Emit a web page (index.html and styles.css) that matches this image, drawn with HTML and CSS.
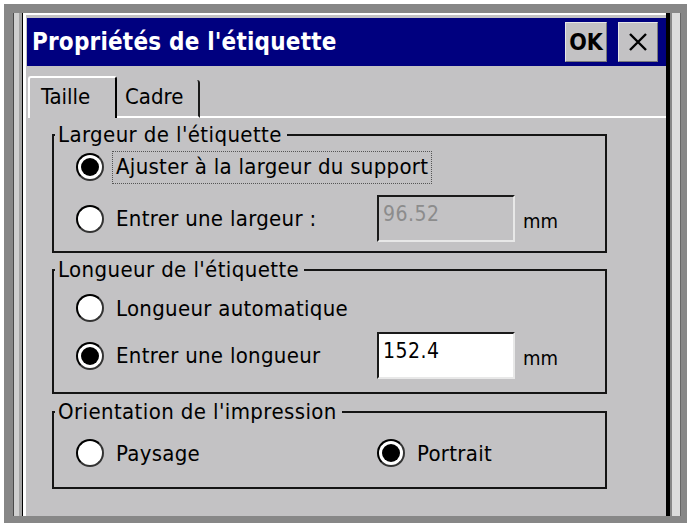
FILE: index.html
```html
<!DOCTYPE html>
<html lang="fr">
<head>
<meta charset="utf-8">
<title>Propriétés de l'étiquette</title>
<link rel="stylesheet" href="styles.css">
</head>
<body>
<div class="desk">
  <div class="leftcol"><div class="strip"></div><div class="shade"></div></div>
  <div class="dialog">
    <div class="inner">
      <div class="titlebar">
        <span class="title">Propriétés de l'étiquette</span>
        <button class="tb ok">OK</button>
        <button class="tb close" aria-label="Fermer">
          <svg width="22" height="22" viewBox="0 0 22 22"><path d="M3 3 L19 19 M19 3 L3 19" stroke="#000" stroke-width="2.4" fill="none"/></svg>
        </button>
      </div>
      <div class="tabs">
        <div class="tab active">Taille</div>
        <div class="tab">Cadre</div>
        <div class="tabfill"></div>
      </div>
      <div class="panel">
        <fieldset class="group g1">
          <legend>Largeur de l'étiquette</legend>
          <div class="row">
            <span class="radio on"></span>
            <span class="label focus">Ajuster à la largeur du support</span>
          </div>
          <div class="row">
            <span class="radio"></span>
            <span class="label">Entrer une largeur :</span>
            <span class="field disabled">96.52</span>
            <span class="unit">mm</span>
          </div>
        </fieldset>
        <fieldset class="group g2">
          <legend>Longueur de l'étiquette</legend>
          <div class="row">
            <span class="radio"></span>
            <span class="label">Longueur automatique</span>
          </div>
          <div class="row">
            <span class="radio on"></span>
            <span class="label">Entrer une longueur</span>
            <span class="field">152.4</span>
            <span class="unit">mm</span>
          </div>
        </fieldset>
        <fieldset class="group g3">
          <legend>Orientation de l'impression</legend>
          <div class="row pair">
            <span class="radio"></span>
            <span class="label">Paysage</span>
            <span class="radio on"></span>
            <span class="label">Portrait</span>
          </div>
        </fieldset>
      </div>
    </div>
  </div>
  <div class="rightcol"><div class="rstrip"></div></div>
</div>
</body>
</html>
```
FILE: styles.css
```css
html, body {
  margin: 0;
  padding: 0;
  background: #fff;
}
body {
  width: 690px;
  height: 525px;
  overflow: hidden;
  font-family: "DejaVu Sans Condensed", "DejaVu Sans", sans-serif;
  font-stretch: condensed;
}
.desk {
  margin: 4px 3px 0 4px;
  height: 519px;
  box-sizing: border-box;
  padding: 9px 0 7px 0;
  background: #878787;
  display: flex;
  overflow: hidden;
}
.leftcol {
  width: 18px;
  flex: none;
  display: flex;
  padding-left: 9px;
  box-sizing: border-box;
}
.strip {
  width: 5px;
  background: #cfcfcf;
  border-left: 1px solid #4a4a4a;
}
.shade {
  flex: 1;
  background: #a3a3a3;
}
.dialog {
  width: 648px;
  flex: none;
  box-sizing: border-box;
  border-left: 1px solid #000;
  border-right: 4px solid #000;
  background: #c3c2c4;
  display: flex;
  flex-direction: column;
}
.inner {
  flex: 1;
  border-left: 3px solid #fff;
  border-top: 2px solid #fff;
  padding: 3px 0 0 1px;
}
.titlebar {
  height: 48px;
  background: #00007f;
  display: flex;
  align-items: center;
  padding: 0 8px 0 5px;
  gap: 11px;
}
.title {
  flex: 1;
  color: #fff;
  font-weight: bold;
  font-size: 24px;
  letter-spacing: 0.2px;
  white-space: nowrap;
}
.tb {
  width: 42px;
  height: 40px;
  padding: 0;
  margin: 0;
  background: #c3c2c4;
  border: 1px solid;
  border-color: #e6e6e6 #7a7a7a #7a7a7a #e6e6e6;
  font-family: inherit;
  font-stretch: condensed;
  font-weight: bold;
  font-size: 23px;
  color: #000;
  display: flex;
  align-items: center;
  justify-content: center;
}
.tb.close { width: 40px; }
.tabs {
  height: 52px;
  display: flex;
  align-items: flex-end;
  padding-left: 1px;
}
.tab {
  box-sizing: border-box;
  height: 38px;
  width: 83px;
  padding-left: 8px;
  font-size: 22px;
  line-height: 34px;
  border-right: 2px solid #1a1a1a;
  border-bottom: 2px solid #fff;
  border-top-right-radius: 3px;
}
.tab.active {
  height: 42px;
  width: 89px;
  padding-left: 11px;
  line-height: 38px;
  border: 2px solid;
  border-color: #fff #000 transparent #fff;
  border-bottom: none;
  border-radius: 3px 3px 0 0;
}
.tabfill {
  flex: 1;
  border-bottom: 2px solid #fff;
}
.panel {
  padding: 7px 0 0 25px;
}
.group {
  box-sizing: border-box;
  width: 555px;
  margin: 0;
  padding: 0;
  border: 2px solid #141414;
  font-size: 22px;
}
.group legend {
  padding: 0 5px 0 3px;
  margin-left: 1px;
  line-height: 20px;
  font-size: 22px;
  letter-spacing: 0.4px;
}
.g1 { padding-bottom: 12px; }
.g2 { margin-top: 7px; padding-top: 6px; padding-bottom: 16px; }
.g3 { margin-top: 8px; padding-top: 9px; padding-bottom: 12px; }
.g1 .row + .row { margin-top: 6px; }
.g2 .row + .row { margin-top: 2px; }
.row {
  height: 44px;
  padding-left: 22px;
  display: grid;
  grid-template-columns: 40px 261px 146px auto;
  align-items: center;
  font-size: 22px;
  letter-spacing: 0.3px;
}
.row.pair {
  grid-template-columns: 40px 261px 40px auto;
}
.radio {
  width: 28px;
  height: 28px;
  box-sizing: border-box;
  border-radius: 50%;
  background: #fff;
  border: 2px solid #000;
  border-bottom-color: #333;
  border-right-color: #333;
  position: relative;
}
.radio.on::after {
  content: "";
  position: absolute;
  left: 3px;
  top: 3px;
  width: 18px;
  height: 18px;
  border-radius: 50%;
  background: #000;
}
.label {
  white-space: nowrap;
  justify-self: start;
}
.label.focus {
  margin-left: -3px;
  padding: 2px 3px 4px 3px;
  outline: 1px dotted #555;
}
.field {
  box-sizing: border-box;
  width: 138px;
  height: 47px;
  padding: 4px 0 0 4px;
  font-size: 21px;
  letter-spacing: 0.5px;
  background: #fff;
  border: 2px solid;
  border-color: #1a1a1a #e8e8e8 #e8e8e8 #1a1a1a;
  align-self: center;
  line-height: 26px;
}
.field.disabled {
  background: #c3c2c4;
  color: #8c8c8c;
}
.unit {
  font-size: 20px;
  letter-spacing: 0;
  padding-top: 4px;
}
.rightcol {
  flex: 1;
  display: flex;
  padding-left: 2px;
}
.rstrip {
  width: 8px;
  background: #dcdcdc;
  border-right: 1px solid #666;
}
```
